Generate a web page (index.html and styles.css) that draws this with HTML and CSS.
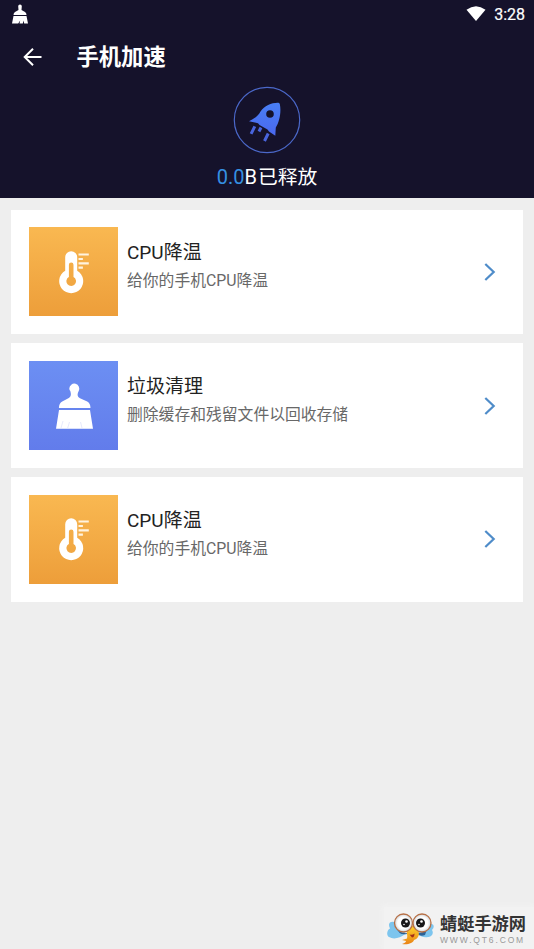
FILE: index.html
```html
<!DOCTYPE html>
<html lang="zh-CN">
<head>
<meta charset="utf-8">
<title>手机加速</title>
<link rel="stylesheet" href="styles.css">
</head>
<body>
<svg width="0" height="0" class="defs">
  <defs>
    <linearGradient id="rocket-fill" x1="0" y1="0" x2="0" y2="1"><stop offset="0" stop-color="#497ff5"/><stop offset="1" stop-color="#4a68ee"/></linearGradient>
    <linearGradient id="body-fill" x1="0" y1="0" x2="0" y2="1"><stop offset="0" stop-color="#ffd329"/><stop offset="1" stop-color="#e98317"/></linearGradient>
    <radialGradient id="eye-fill"><stop offset=".65" stop-color="#fff"/><stop offset="1" stop-color="#cdd3d8"/></radialGradient>
    <symbol id="thermo" viewBox="0 0 60 60">
      <path fill="#fff" fill-rule="evenodd" d="M27.200 9.200a6 6 0 0 1 6 6V28.800a12 12 0 1 1-12 0V15.200a6 6 0 0 1 6-6ZM24.900 22.800V35a4.800 4.800 0 1 0 4.600 0V22.800a2.300 2.300 0 0 0-4.600 0Z"/>
      <path d="M34.500 12.500h10.300M34.500 17h4.400M34.500 21.300h10.300M34.500 25.700h4.400" stroke="#fff3df" stroke-width="2.200"/>
    </symbol>
    <symbol id="chevron" viewBox="0 0 12 20"><path d="M1.300 2 9.700 10 1.300 18" fill="none" stroke="#4f8cc9" stroke-width="2.200"/></symbol>
  </defs>
</svg>
<header class="header">
  <div class="status">
    <svg class="status-broom" viewBox="0 0 16 20"><path fill="#fff" d="M6.200 2.200a1.800 1.800 0 0 1 3.600 0L9.500 6l3.500 2q1.500.8 1.500 3h-13q0-2.200 1.500-3l3.500-2ZM1.500 12h13l1.500 7.500h-3.800l-.7-3-.7 3H7.500l.7-3-2 3H0Z"/></svg>
    <svg class="wifi" viewBox="0 0 20 15"><path fill="#fff" d="M.5 3.800Q10-3.500 19.500 3.800L10 15Z"/></svg>
    <span class="clock">3:28</span>
  </div>
  <div class="titlebar">
    <svg class="back" viewBox="0 0 20 20"><path d="M18.500 10H2M10 1.700 1.700 10l8.300 8.300" fill="none" stroke="#fff" stroke-width="2"/></svg>
    <h1>手机加速</h1>
  </div>
  <div class="hero">
    <svg class="rocket" viewBox="0 0 68 68">
      <circle cx="34" cy="34" r="32.700" fill="none" stroke="#4b68c9" stroke-width="1.200"/>
      <path fill="url(#rocket-fill)" fill-rule="evenodd" d="M45.500 16.800C39 16.500 31.500 19.500 27.500 25.500 25.500 30 20.500 33 16 35.200L25 37.200 26.500 39 34.500 43.500 36 45.500 42.300 49.800 42.800 41.500C46.500 36 48.500 25.500 46.800 18Q46.500 17 45.500 16.800ZM37 24.200a3.800 3.800 0 1 1 0 7.600 3.800 3.800 0 0 1 0-7.600Z"/>
      <path d="m21.800 40.300-3.700 7.500M28 41.500l-2 4M35.200 47.500l-3.700 7.500" stroke="#4965de" stroke-width="3"/>
    </svg>
    <p class="released"><span class="amount">0.0</span><span class="unit">B</span>已释放</p>
  </div>
</header>
<main class="list">
  <section class="card">
    <div class="tile orange"><svg><use href="#thermo"/></svg></div>
    <div class="text"><h2>CPU降温</h2><p>给你的手机CPU降温</p></div>
    <svg class="chevron"><use href="#chevron"/></svg>
  </section>
  <section class="card">
    <div class="tile blue"><svg viewBox="0 0 60 60">
      <path fill="#fff" d="M25.300 12.500a5 5 0 1 1 9.400 2.500c-1.300 2.500-2 5.500 1.300 7.200l7.200 3.300q3.200 1.500 3.300 6.500H14.900q.1-5 3.300-6.500l6.200-3.300c3.300-1.700 2.600-4.700 1.900-7.200q-1-1-1-2.500ZM15 34h31l3 18.800H12Z"/>
      <path d="m19 45-2 7M25.500 46l-1.800 6M36.500 46l1.500 6" stroke="#dfe3fb" stroke-width=".8"/>
    </svg></div>
    <div class="text"><h2>垃圾清理</h2><p>删除缓存和残留文件以回收存储</p></div>
    <svg class="chevron"><use href="#chevron"/></svg>
  </section>
  <section class="card">
    <div class="tile orange"><svg><use href="#thermo"/></svg></div>
    <div class="text"><h2>CPU降温</h2><p>给你的手机CPU降温</p></div>
    <svg class="chevron"><use href="#chevron"/></svg>
  </section>
</main>
<footer class="brand">
  <svg class="mascot" viewBox="0 0 48 36">
    <path d="M10 13C4 10 0 13 3 18.500 0 20-1 25 2 27q7 4 17-3.500ZM34 18l8-4c5-1 6 3 3 6 2 3 0 7-4 7-4 1-9-1-12-4Z" fill="#7dc5ee"/>
    <path d="M9 17q3 7 12 6l6 0q9 1 13-4l-2 6q-5 2-9-2l-9 1q-8 2-11-7Z" fill="#2d6194"/>
    <path d="M20 19c3-4 7-4 9-1 5 4 3 11-2 12-1 3-6 5-12 4 3-1 4-2 4-3l-4-1 5-1.500c1-3-1-6 0-9.500Z" fill="url(#body-fill)"/>
    <circle cx="16.500" cy="13" r="9" fill="url(#eye-fill)" stroke="#b77046" stroke-width="1.300"/>
    <circle cx="35" cy="13" r="9" fill="url(#eye-fill)" stroke="#b77046" stroke-width="1.300"/>
    <circle cx="18.500" cy="13" r="4.500" fill="#171719"/><circle cx="33.500" cy="13" r="4.500" fill="#171719"/>
    <circle cx="19.500" cy="11.500" r="1.300" fill="#fff"/><circle cx="17" cy="14.500" r=".8" fill="#fff"/>
    <circle cx="34.500" cy="11.500" r="1.300" fill="#fff"/><circle cx="32" cy="14.500" r=".8" fill="#fff"/>
    <path d="M22.500 24.500q3 1 5-1 0 4-2.500 4Z" fill="#a42e18"/>
  </svg>
  <div class="brand-text"><strong>蜻蜓手游网</strong><span>WWW.QT6.COM</span></div>
</footer>
</body>
</html>
```
FILE: styles.css
```css
* { box-sizing: border-box; }
body { margin: 0; height: 949px; display: flex; flex-direction: column; overflow: hidden; background: #eee; font-family: Roboto, "Noto Sans CJK SC", sans-serif; }
h1, h2, p { margin: 0; font-weight: 400; white-space: nowrap; }
svg { display: block; flex: none; }
.defs { position: absolute; }
.header { height: 198px; flex: none; background: #15122b; color: #fff; }
.status { height: 28px; display: flex; align-items: center; padding: 0 9px 0 12px; }
.status-broom { width: 16px; height: 20px; margin-top: -1px; }
.wifi { width: 20px; height: 15px; margin: -2px 8.500px 0 auto; }
.clock { font-size: 16px; font-weight: 400; line-height: 28px; padding-top: 1px; -webkit-text-stroke: .2px; }
.titlebar { height: 58px; display: flex; align-items: center; padding-left: 22.500px; }
.back { width: 20px; height: 20px; margin-right: 34px; }
.titlebar h1 { font-size: 22.300px; font-weight: 700; line-height: 58px; }
.hero { display: flex; flex-direction: column; align-items: center; }
.rocket { width: 68px; height: 68px; }
.released { font-size: 19.800px; line-height: 30px; margin-top: 8px; }
.amount { color: #3590e2; }
.amount, .unit { font-size: 20px; }
.unit { margin-right: 1px; }
.list { flex: 1; display: flex; flex-direction: column; gap: 9.300px; padding: 11.500px 11px 0; }
.card { height: 124.500px; flex: none; display: flex; align-items: center; padding: 0 27px 0 18px; background: #fff; }
.tile { width: 89px; height: 89px; flex: none; display: grid; place-items: center; }
.tile svg { width: 60px; height: 60px; }
.orange { background: linear-gradient(#f9b851, #ed9e3a); }
.blue { background: linear-gradient(#6c8ff3, #627ceb); }
.text { flex: 1; padding-left: 9px; margin-top: -8.600px; }
.text h2 { font-size: 19px; line-height: 28px; color: #222; }
.text p { font-size: 15.800px; line-height: 28px; color: #686868; }
.chevron { width: 12px; height: 20px; }
.brand { height: 42px; display: flex; align-items: center; align-self: flex-end; width: 150px; padding-left: 3px; background: #f2f2f2; box-shadow: 0 0 5px 2px #f2f2f2; }
.mascot { width: 48px; height: 36px; }
.brand-text { display: flex; flex-direction: column; margin: 2px 0 0 5px; white-space: nowrap; }
.brand-text strong { font-size: 17.200px; line-height: 21px; font-weight: 700; color: #343434; }
.brand-text span { font: 8.500px/10px "Liberation Sans", sans-serif; letter-spacing: 1.850px; color: #999; }
```
